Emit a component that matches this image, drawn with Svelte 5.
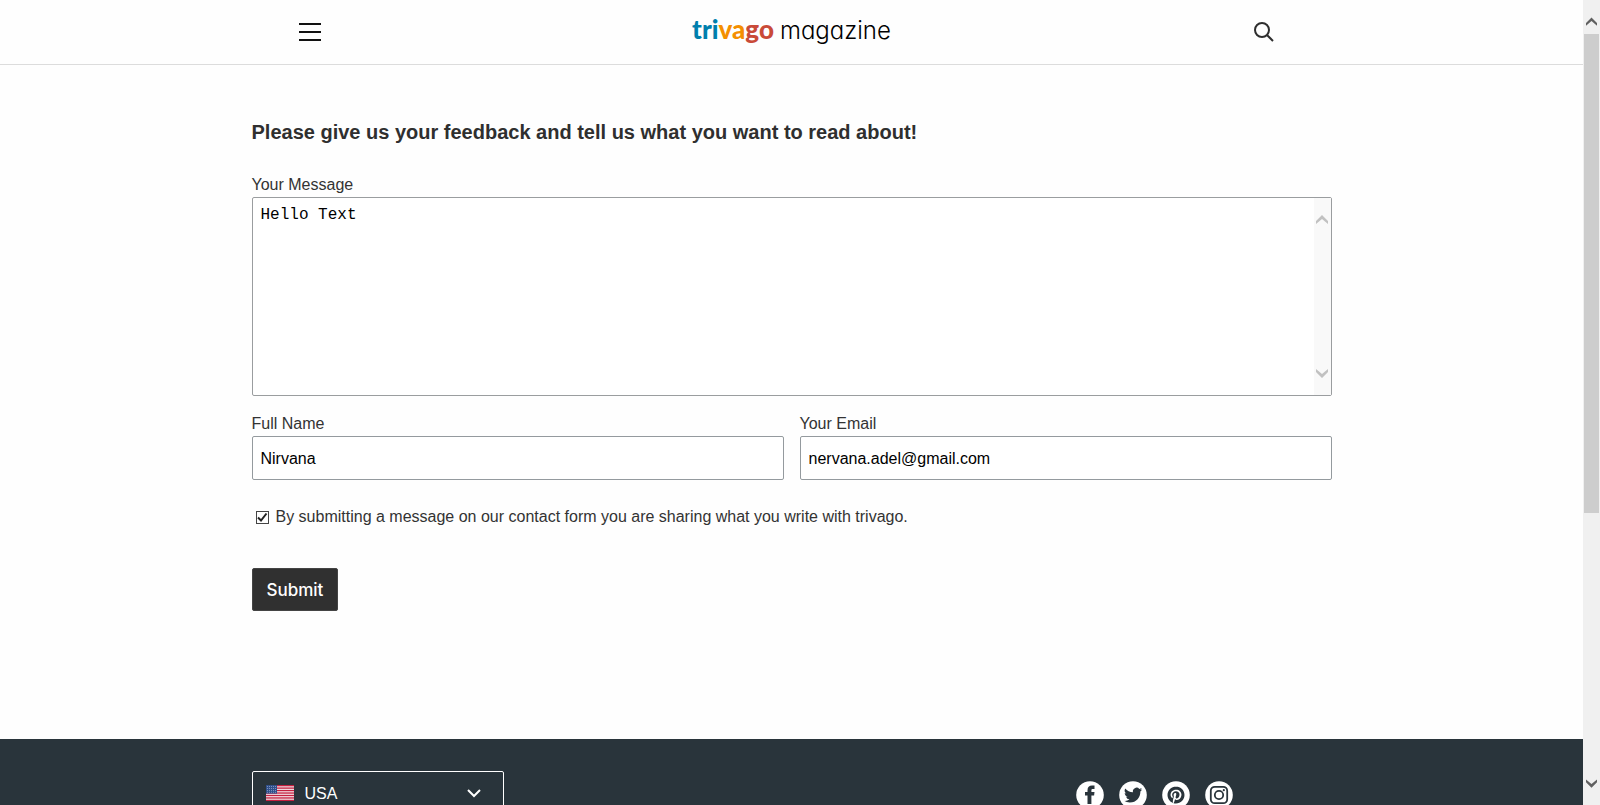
<script>
  let message = $state('Hello Text');
  let name = $state('Nirvana');
  let email = $state('nervana.adel@gmail.com');
  let agreed = $state(true);
  let country = $state('USA');
  const stripes = [0, 1, 2, 3, 4, 5, 6];
</script>

<div class="window">
  <div class="page">
    <header>
      <div class="bar">
        <button class="icon" aria-label="Menu">
          <svg width="22" height="18" viewBox="0 0 22 18" fill="#111"><path d="M0 0h22v2H0zM0 8h22v2H0zM0 16h22v2H0z" /></svg>
        </button>
        <a class="logo" href="#home"><span class="brand"><span class="tri">tri</span><span class="va">va</span><span class="go">go</span></span><span class="mag">magazine</span></a>
        <button class="icon search" aria-label="Search">
          <svg width="20" height="20" viewBox="0 0 20 20" fill="none" stroke="#2e2e2e" stroke-width="2"><circle cx="8" cy="8" r="7" /><path d="M13 13l6 6" /></svg>
        </button>
      </div>
    </header>

    <main>
      <h1>Please give us your feedback and tell us what you want to read about!</h1>
      <form onsubmit={(e) => e.preventDefault()}>
        <div class="field">
          <label for="message">Your Message</label>
          <div class="box">
            <textarea id="message" bind:value={message}></textarea>
            <div class="strip" aria-hidden="true">
              <svg width="12" height="9" viewBox="0 0 12 9"><path d="M6 0L12 6V9L6 4L0 9V6z" fill="#c1c1c1" /></svg>
              <svg width="12" height="9" viewBox="0 0 12 9"><path d="M6 9L12 3V0L6 5L0 0V3z" fill="#c1c1c1" /></svg>
            </div>
          </div>
        </div>
        <div class="pair">
          <div class="field">
            <label for="name">Full Name</label>
            <input id="name" class="text" type="text" bind:value={name} />
          </div>
          <div class="field">
            <label for="email">Your Email</label>
            <input id="email" class="text" type="email" bind:value={email} />
          </div>
        </div>
        <div class="consent">
          <input id="agree" type="checkbox" bind:checked={agreed} />
          <label for="agree">By submitting a message on our contact form you are sharing what you write with trivago.</label>
        </div>
        <button class="submit" type="submit">Submit</button>
      </form>
    </main>

    <footer>
      <div class="foot">
        <div class="country">
          <svg class="flag" width="28" height="16" viewBox="0 0 28 16" aria-hidden="true">
            <rect width="28" height="16" fill="#f4e6ea" />
            {#each stripes as i}
              <rect y={(i * 32) / 13} width="28" height="1.3" fill="#c4203f" />
            {/each}
            <rect width="11" height="8.6" fill="#2f4f8a" />
            <path d="M1 1.5h9M1 3.5h9M1 5.5h9M1 7.3h9" stroke="#8fa3c8" stroke-width=".8" stroke-dasharray="1 1" />
          </svg>
          <select aria-label="Country" bind:value={country}>
            <option>USA</option>
          </select>
          <svg class="chev" width="14" height="9" viewBox="0 0 14 9" fill="none" stroke="#fff" stroke-width="2" aria-hidden="true"><path d="M1 1l6 6 6-6" /></svg>
        </div>
        <nav aria-label="Social">
          <a href="#facebook" aria-label="Facebook">
            <svg width="28" height="28" viewBox="0 0 28 28"><circle cx="14" cy="14" r="13.8" fill="#fff" /><path d="M11.5 23V14.5H9V11h2.5V9.2c0-3.2 1.7-4.7 4.5-4.7h2.5v3.4h-1.6c-1.1 0-1.5.5-1.5 1.4V11h3.1l-.4 3.5h-2.7V23z" fill="#29343b" /></svg>
          </a>
          <a href="#twitter" aria-label="Twitter">
            <svg width="28" height="28" viewBox="0 0 28 28"><circle cx="14" cy="14" r="13.8" fill="#fff" /><path transform="translate(5 5) scale(.76)" d="M23.95 4.57a10 10 0 0 1-2.82.77 4.96 4.96 0 0 0 2.16-2.72c-.95.55-2 .95-3.13 1.18a4.92 4.92 0 0 0-8.38 4.48C7.69 8.1 4.07 6.13 1.64 3.16a4.92 4.92 0 0 0 1.52 6.57 4.9 4.9 0 0 1-2.23-.61v.06c0 2.38 1.7 4.37 3.95 4.82a5 5 0 0 1-2.21.09 4.94 4.94 0 0 0 4.6 3.42A9.87 9.87 0 0 1 0 19.54a13.99 13.99 0 0 0 7.56 2.21c9.05 0 14-7.5 14-13.98 0-.21 0-.42-.02-.63a9.94 9.94 0 0 0 2.41-2.57z" fill="#29343b" /></svg>
          </a>
          <a href="#pinterest" aria-label="Pinterest">
            <svg width="28" height="28" viewBox="0 0 28 28"><circle cx="14" cy="14" r="13.8" fill="#fff" /><path transform="translate(5.5 5.5) scale(.71)" d="M12 0C5.37 0 0 5.37 0 11.99c0 5.08 3.16 9.41 7.62 11.16-.11-.95-.2-2.41.04-3.44.22-.94 1.4-5.96 1.4-5.96s-.36-.72-.36-1.78c0-1.67.97-2.91 2.17-2.91 1.03 0 1.52.77 1.52 1.69 0 1.03-.65 2.57-.99 3.99-.29 1.2.6 2.17 1.77 2.17 2.13 0 3.77-2.25 3.77-5.48 0-2.87-2.06-4.87-5.01-4.87-3.41 0-5.42 2.56-5.42 5.2 0 1.03.4 2.14.89 2.74.1.12.11.22.08.35l-.33 1.36c-.05.22-.17.27-.4.16-1.5-.69-2.43-2.88-2.43-4.65 0-3.78 2.75-7.25 7.92-7.25 4.16 0 7.4 2.97 7.4 6.93 0 4.14-2.61 7.46-6.23 7.46-1.22 0-2.36-.63-2.76-1.38l-.75 2.85c-.27 1.05-1 2.35-1.5 3.15 1.12.35 2.31.54 3.55.54 6.61 0 11.98-5.37 11.98-11.99C23.97 5.39 18.6.03 11.99.03z" fill="#29343b" /></svg>
          </a>
          <a href="#instagram" aria-label="Instagram">
            <svg width="28" height="28" viewBox="0 0 28 28" fill="none" stroke="#29343b" stroke-width="1.8"><circle cx="14" cy="14" r="13.8" fill="#fff" stroke="none" /><rect x="5.8" y="5.8" width="16.4" height="16.4" rx="4" /><circle cx="14" cy="14" r="4.2" /><circle cx="18.8" cy="9.2" r="1.1" fill="#29343b" stroke="none" /></svg>
          </a>
        </nav>
      </div>
    </footer>
  </div>

  <div class="rail" aria-hidden="true">
    <svg width="11" height="9" viewBox="0 0 12 9"><path d="M6 0L12 6V9L6 4L0 9V6z" fill="#606060" /></svg>
    <div class="track"><div class="thumb"></div></div>
    <svg width="11" height="9" viewBox="0 0 12 9"><path d="M6 9L12 3V0L6 5L0 0V3z" fill="#606060" /></svg>
  </div>
</div>

<style>
  :global(body) {
    margin: 0;
    font: 16px/20px 'Liberation Sans', Arial, sans-serif;
    color: #333;
  }
  * { box-sizing: border-box; }
  svg { display: block; }
  button, input, textarea, select { font: inherit; margin: 0; }

  .window {
    display: grid;
    grid-template-columns: minmax(0, 1fr) 17px;
    height: 100vh;
  }
  .page {
    overflow-y: auto;
    scrollbar-width: none;
    background: #fefefe;
  }
  .bar, main, .foot {
    max-width: 1080px;
    margin: 0 auto;
  }

  header { border-bottom: 1px solid #dcdcdc; }
  .bar {
    display: grid;
    grid-template-columns: 1fr auto 1fr;
    align-items: center;
    height: 64px;
    padding: 0 58px 0 47px;
  }
  .icon {
    justify-self: start;
    padding: 0;
    border: 0;
    background: none;
  }
  .search { justify-self: end; }
  .logo {
    display: flex;
    align-items: baseline;
    gap: 6px;
    margin-left: 11px;
    padding-bottom: 4px;
    text-decoration: none;
  }
  .brand { font: 900 26px/32px Lato, sans-serif; }
  .tri { color: #007fad; }
  .va { color: #f48f00; }
  .go { color: #c94a38; }
  .mag {
    font: 300 24px/32px Inter, sans-serif;
    font-optical-sizing: none;
    font-variation-settings: 'opsz' 14;
    font-feature-settings: 'cv11';
    color: #000;
  }

  main { padding: 55px 0 128px; }
  h1 {
    margin: 0 0 31px;
    font-size: 20px;
    line-height: 24px;
    font-weight: 700;
    color: #2f2f2f;
  }
  .field {
    display: flex;
    flex-direction: column;
    gap: 2px;
  }
  .box {
    display: flex;
    height: 199px;
    border: 1px solid #9a9d9f;
    border-radius: 2px;
    background: #fff;
  }
  textarea {
    flex: 1;
    padding: 7px 8px;
    border: 0;
    outline: 0;
    resize: none;
    overflow: hidden;
    background: none;
    color: #000;
    font: 16px/20px 'Liberation Mono', 'Courier New', monospace;
  }
  .strip {
    display: flex;
    flex-direction: column;
    justify-content: space-between;
    align-items: center;
    width: 17px;
    padding: 17px 0;
    background: #f9f9f9;
  }
  .pair {
    display: grid;
    grid-template-columns: 1fr 1fr;
    gap: 16px;
    margin-top: 18px;
  }
  .text {
    width: 100%;
    height: 44px;
    padding: 1px 8px 0;
    border: 1px solid #949a9e;
    border-radius: 2px;
    background: #fff;
    color: #000;
  }
  .consent {
    display: flex;
    align-items: center;
    gap: 7px;
    margin: 27px 0 41px;
    padding-left: 4px;
  }
  .consent input {
    appearance: none;
    width: 13px;
    height: 13px;
    border: 1px solid #444;
    background: #fff;
  }
  .consent input:checked {
    background: url("data:image/svg+xml,%3Csvg xmlns='http://www.w3.org/2000/svg' viewBox='0 0 11 11'%3E%3Cpath d='M1 5.5L4 8.5L9.5 1.5' fill='none' stroke='%23222' stroke-width='2'/%3E%3C/svg%3E") center / 11px 11px;
  }
  .submit {
    display: block;
    height: 43px;
    padding: 0 14px;
    border: 1px solid #444;
    border-radius: 2px;
    background: #303030;
    color: #fff;
    font: 500 17px/20px Inter, sans-serif;
    font-optical-sizing: none;
    font-variation-settings: 'opsz' 14;
  }

  footer {
    padding: 32px 0;
    background: #29343b;
  }
  .foot {
    display: flex;
    justify-content: space-between;
    align-items: flex-start;
  }
  .country {
    display: grid;
    grid-template-columns: 28px 1fr 14px;
    align-items: center;
    width: 252px;
    height: 44px;
    padding: 0 22px 0 13px;
    border: 1px solid #fff;
    border-radius: 2px;
  }
  .country select {
    appearance: none;
    height: 42px;
    padding: 1px 11px 0;
    border: 0;
    outline: 0;
    background: none;
    color: #fff;
  }
  nav {
    display: flex;
    gap: 15px;
    padding: 10px 99px 0 0;
  }

  .rail {
    display: flex;
    flex-direction: column;
    align-items: center;
    gap: 8px;
    padding: 17px 0;
    background: #f0f0f0;
  }
  .track {
    flex: 1;
    width: 15px;
  }
  .thumb {
    height: 65%;
    background: #cdcdcd;
  }
</style>
